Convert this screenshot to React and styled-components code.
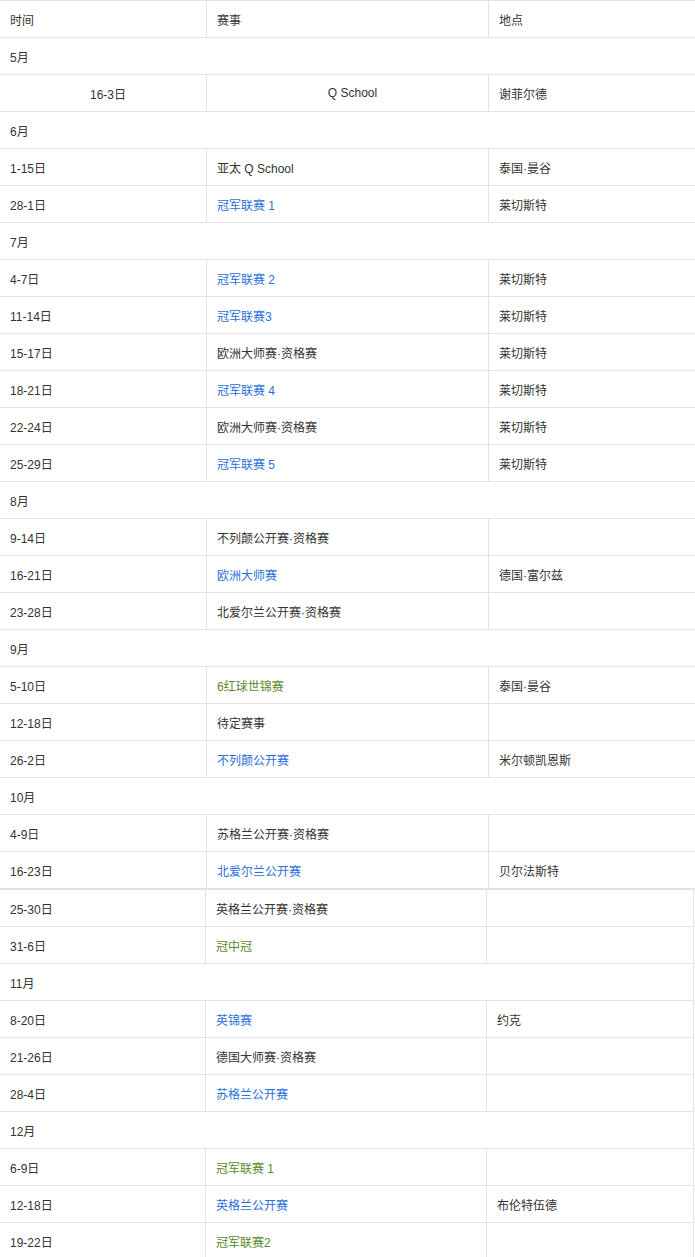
import React from "react";
import styled, { createGlobalStyle } from "styled-components";

const Global = createGlobalStyle`
  body { margin: 0; background: #fff; font-family: "Liberation Sans", "Noto Sans CJK SC", sans-serif; }
`;

const Table = styled.table`
  border-collapse: collapse;
  table-layout: fixed;
  width: ${(p) => p.$w}px;
  margin-left: -1px;
  font-size: 12px;
  color: #333;
`;
const Col = styled.col`
  width: ${(p) => (p.$w ? `${p.$w}px` : "auto")};
`;
const Td = styled.td`
  border: 1px solid #e3e3e3;
  height: 37px;
  padding: 0 0 0 10px;
  box-sizing: border-box;
  text-align: ${(p) => (p.$center ? "center" : "left")};
  color: ${(p) => (p.$c === "b" ? "#2b6fd8" : p.$c === "g" ? "#5a8a2a" : "#333")};
  white-space: nowrap;
`;

const t1 = [
  ["时间", "赛事", "地点"],
  ["5月"],
  ["16-3日", "Q School", "谢菲尔德", "", true],
  ["6月"],
  ["1-15日", "亚太 Q School", "泰国·曼谷"],
  ["28-1日", "冠军联赛 1", "莱切斯特", "b"],
  ["7月"],
  ["4-7日", "冠军联赛 2", "莱切斯特", "b"],
  ["11-14日", "冠军联赛3", "莱切斯特", "b"],
  ["15-17日", "欧洲大师赛·资格赛", "莱切斯特"],
  ["18-21日", "冠军联赛 4", "莱切斯特", "b"],
  ["22-24日", "欧洲大师赛·资格赛", "莱切斯特"],
  ["25-29日", "冠军联赛 5", "莱切斯特", "b"],
  ["8月"],
  ["9-14日", "不列颠公开赛·资格赛", ""],
  ["16-21日", "欧洲大师赛", "德国·富尔兹", "b"],
  ["23-28日", "北爱尔兰公开赛·资格赛", ""],
  ["9月"],
  ["5-10日", "6红球世锦赛", "泰国·曼谷", "g"],
  ["12-18日", "待定赛事", ""],
  ["26-2日", "不列颠公开赛", "米尔顿凯恩斯", "b"],
  ["10月"],
  ["4-9日", "苏格兰公开赛·资格赛", ""],
  ["16-23日", "北爱尔兰公开赛", "贝尔法斯特", "b"],
];
const t2 = [
  ["25-30日", "英格兰公开赛·资格赛", ""],
  ["31-6日", "冠中冠", "", "g"],
  ["11月"],
  ["8-20日", "英锦赛", "约克", "b"],
  ["21-26日", "德国大师赛·资格赛", ""],
  ["28-4日", "苏格兰公开赛", "", "b"],
  ["12月"],
  ["6-9日", "冠军联赛 1", "", "g"],
  ["12-18日", "英格兰公开赛", "布伦特伍德", "b"],
  ["19-22日", "冠军联赛2", "", "g"],
];

function Rows({ rows }) {
  return rows.map((r, i) =>
    r.length === 1 ? (
      <tr key={i}><Td colSpan={3}>{r[0]}</Td></tr>
    ) : (
      <tr key={i}>
        <Td $center={r[4]}>{r[0]}</Td>
        <Td $center={r[4]} $c={r[3]}>{r[1]}</Td>
        <Td>{r[2]}</Td>
      </tr>
    )
  );
}

export default function App() {
  return (
    <>
      <Global />
      <Table $w={698}>
        <colgroup><Col $w={207} /><Col $w={282} /><Col /></colgroup>
        <tbody><Rows rows={t1} /></tbody>
      </Table>
      <Table $w={695}>
        <colgroup><Col $w={206} /><Col $w={281} /><Col /></colgroup>
        <tbody><Rows rows={t2} /></tbody>
      </Table>
    </>
  );
}
